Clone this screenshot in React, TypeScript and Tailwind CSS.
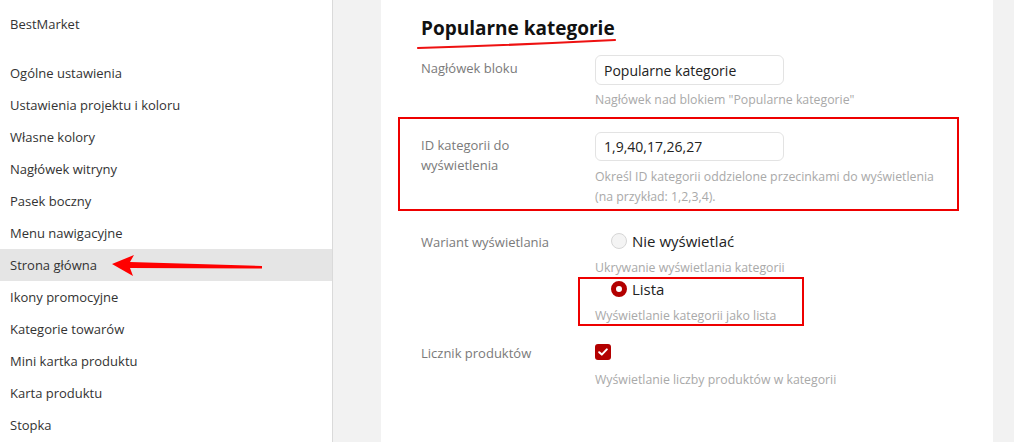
import React from "react";

const sidebarItems = [
  "Ogólne ustawienia",
  "Ustawienia projektu i koloru",
  "Własne kolory",
  "Nagłówek witryny",
  "Pasek boczny",
  "Menu nawigacyjne",
  "Strona główna",
  "Ikony promocyjne",
  "Kategorie towarów",
  "Mini kartka produktu",
  "Karta produktu",
  "Stopka",
];

function Radio({ checked }: { checked?: boolean }) {
  return checked ? (
    <span className="w-[16px] h-[16px] rounded-full border-[5px] border-[#b30000] bg-white box-border" />
  ) : (
    <span className="w-[16px] h-[16px] rounded-full border border-[#d6d6d6] bg-[#f4f4f4] box-border" />
  );
}

export default function App() {
  return (
    <div
      className="relative flex w-[1014px] h-[442px] overflow-hidden bg-[#f2f2f2] text-[#333]"
      style={{ fontFamily: '"Open Sans", "Noto Sans", sans-serif' }}
    >
      <aside className="w-[333px] h-full bg-white border-r border-[#dadada] flex flex-col">
        <div className="h-[50px] flex items-center pl-[10px] text-[13px]">BestMarket</div>
        <div className="h-[7px]" />
        {sidebarItems.map((it) => (
          <div
            key={it}
            className={`h-[32px] flex items-center pl-[10px] pt-[1px] text-[13px] ${
              it === "Strona główna" ? "bg-[#e5e5e5]" : ""
            }`}
          >
            {it}
          </div>
        ))}
      </aside>

      <main className="flex-1 h-full pl-[48px] pr-[21px]">
        <div className="relative h-full bg-white pl-[40px]">
          <h1 className="pt-[14px] h-[42px] text-[19px] leading-[28px] font-bold text-[#111]">
            Popularne kategorie
          </h1>
          <svg className="absolute left-[35px] top-[36px]" width="202" height="16" viewBox="0 0 202 16">
            <path d="M2 12 Q 100 9 199 4" stroke="#ee1111" strokeWidth="2.2" fill="none" strokeLinecap="round" />
          </svg>

          {/* Row 1 */}
          <div className="flex mt-[13px]">
            <div className="w-[174px] pt-[3px] text-[13px] leading-[20px] text-[#7a7a7a]">Nagłówek bloku</div>
            <div className="flex flex-col">
              <div className="w-[189px] h-[30px] rounded-[6px] border border-[#e3e3e3] flex items-center px-[8px] text-[14px] text-[#222]">
                Popularne kategorie
              </div>
              <div className="mt-[5px] text-[12.3px] leading-[20px] text-[#a9a9a9]">
                Nagłówek nad blokiem "Popularne kategorie"
              </div>
            </div>
          </div>

          {/* Row 2 */}
          <div className="relative flex mt-[22px]">
            <div className="w-[174px] pt-[3px] text-[13px] leading-[20px] text-[#7a7a7a]">
              ID kategorii do
              <br />
              wyświetlenia
            </div>
            <div className="flex flex-col">
              <div className="w-[189px] h-[29px] rounded-[6px] border border-[#e3e3e3] flex items-center px-[8px] text-[14px] text-[#222]">
                1,9,40,17,26,27
              </div>
              <div className="mt-[6px] text-[12.3px] leading-[20px] text-[#a9a9a9] w-[350px]">
                Określ ID kategorii oddzielone przecinkami do wyświetlenia (na przykład: 1,2,3,4).
              </div>
            </div>
            <div className="absolute left-[-23px] top-[-15px] w-[561px] h-[94px] border-2 border-[#ee0000] pointer-events-none" />
          </div>

          {/* Row 3 */}
          <div className="flex mt-[22px]">
            <div className="w-[174px] pt-[3px] text-[13px] leading-[20px] text-[#7a7a7a]">Wariant wyświetlania</div>
            <div className="relative flex flex-col">
              <div className="h-[24px] flex items-center pl-[16px] gap-[5px] text-[15px] text-[#222]">
                <Radio />
                <span>Nie wyświetlać</span>
              </div>
              <div className="mt-[5px] text-[12.3px] leading-[20px] text-[#a9a9a9]">Ukrywanie wyświetlania kategorii</div>
              <div className="h-[22px] flex items-center pl-[16px] gap-[5px] text-[15px] text-[#222]">
                <Radio checked />
                <span>Lista</span>
              </div>
              <div className="mt-[6px] text-[12.3px] leading-[20px] text-[#a9a9a9]">Wyświetlanie kategorii jako lista</div>
              <div className="absolute left-[-17px] top-[48px] w-[226px] h-[49px] border-2 border-[#ee0000] pointer-events-none" />
            </div>
          </div>

          {/* Row 4 */}
          <div className="flex mt-[16px]">
            <div className="w-[174px] pt-[1px] text-[13px] leading-[20px] text-[#7a7a7a]">Licznik produktów</div>
            <div className="flex flex-col">
              <div className="h-[20px] flex items-center">
                <span className="w-[16px] h-[16px] rounded-[3px] bg-[#b30000] flex items-center justify-center">
                  <svg width="10" height="8" viewBox="0 0 10 8">
                    <path d="M1.2 4.2 L3.8 6.6 L8.8 1.4" stroke="#fff" strokeWidth="2" fill="none" strokeLinecap="round" strokeLinejoin="round" />
                  </svg>
                </span>
              </div>
              <div className="mt-[8px] text-[12.3px] leading-[20px] text-[#a9a9a9]">
                Wyświetlanie liczby produktów w kategorii
              </div>
            </div>
          </div>
        </div>
      </main>

      <svg className="absolute left-0 top-0 pointer-events-none" width="1014" height="442" viewBox="0 0 1014 442">
        <polygon points="112,264 134,255 130,262 262,266 262,268.5 130,268 133,276" fill="#ff0000" />
      </svg>
    </div>
  );
}
